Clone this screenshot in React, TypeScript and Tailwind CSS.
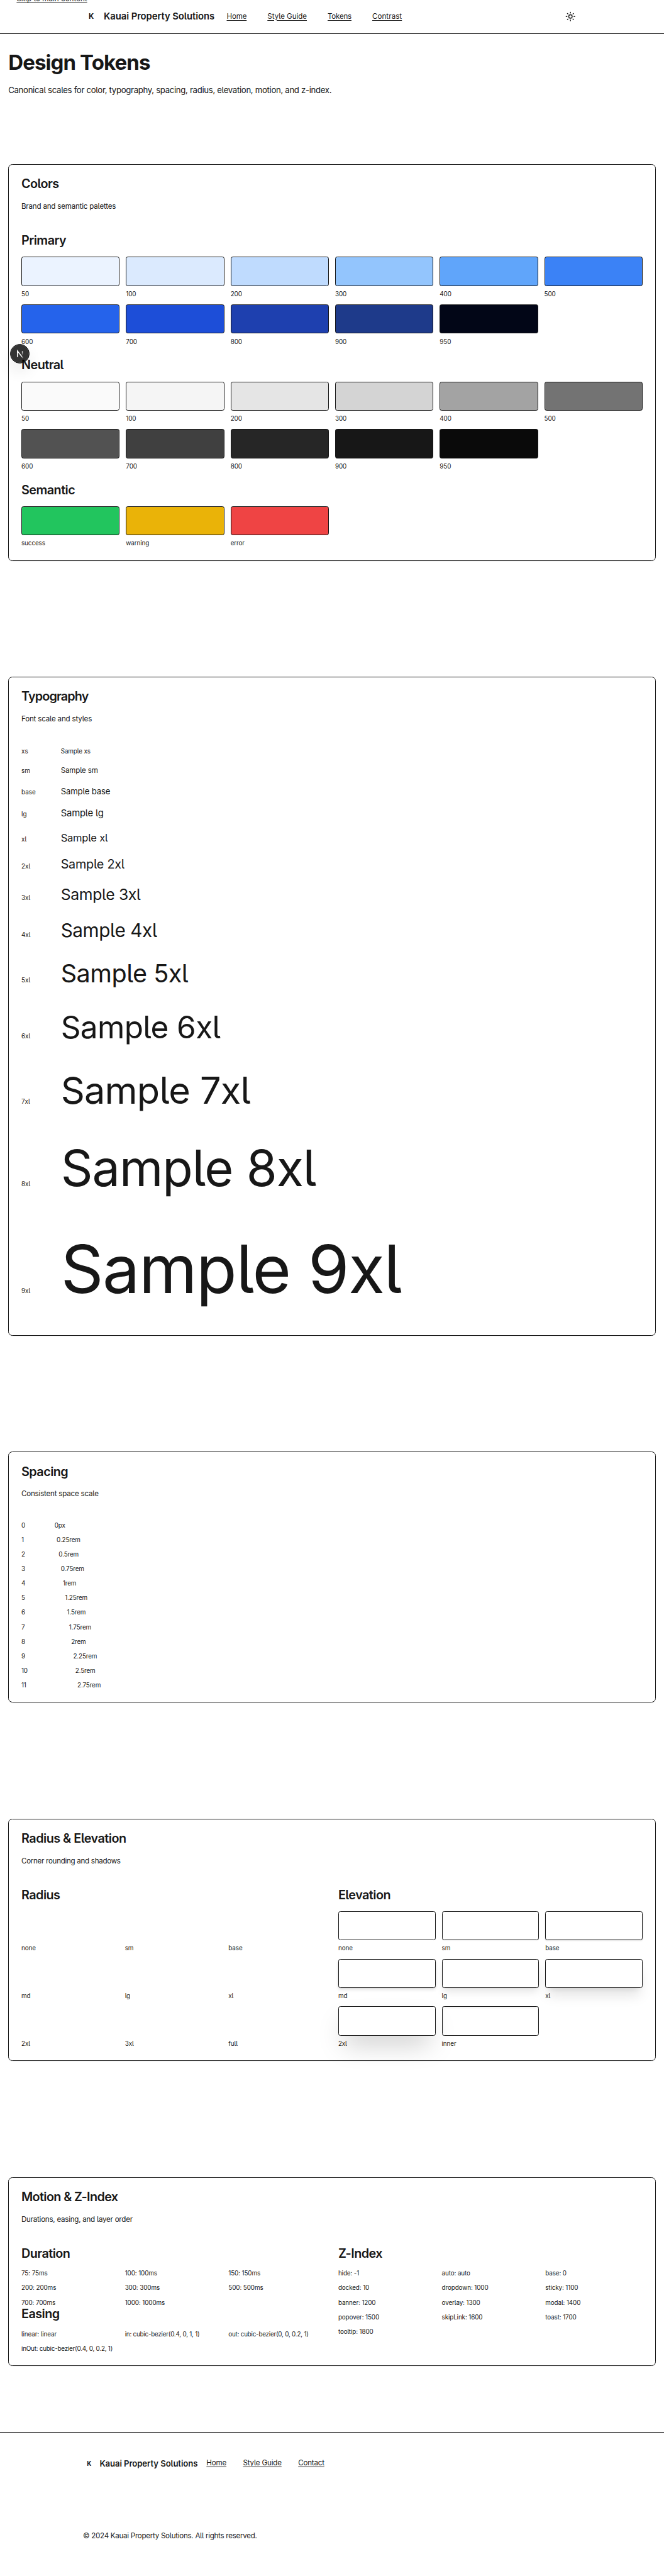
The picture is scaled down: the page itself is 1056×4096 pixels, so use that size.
import type { ReactNode } from "react";
import { Sun } from "lucide-react";

const primary = [
  ["50", "bg-[#ebf3ff]"], ["100", "bg-[#dbeafe]"], ["200", "bg-[#bfdbfe]"], ["300", "bg-[#93c5fd]"],
  ["400", "bg-[#60a5fa]"], ["500", "bg-[#3b82f6]"], ["600", "bg-[#2563eb]"], ["700", "bg-[#1d4ed8]"],
  ["800", "bg-[#1e40af]"], ["900", "bg-[#1e3a8a]"], ["950", "bg-[#020617]"],
];
const neutral = [
  ["50", "bg-[#fafafa]"], ["100", "bg-[#f5f5f5]"], ["200", "bg-[#e5e5e5]"], ["300", "bg-[#d4d4d4]"],
  ["400", "bg-[#a3a3a3]"], ["500", "bg-[#737373]"], ["600", "bg-[#525252]"], ["700", "bg-[#404040]"],
  ["800", "bg-[#262626]"], ["900", "bg-[#171717]"], ["950", "bg-[#0a0a0a]"],
];
const semantic = [
  ["success", "bg-[#22c55e]"], ["warning", "bg-[#eab308]"], ["error", "bg-[#ef4444]"],
];
const typeScale = [
  ["xs", "text-[12px]"], ["sm", "text-[14px]"], ["base", "text-[16px]"], ["lg", "text-[18px]"],
  ["xl", "text-[20px]"], ["2xl", "text-[24px]"], ["3xl", "text-[30px]"], ["4xl", "text-[36px]"],
  ["5xl", "text-[48px]"], ["6xl", "text-[60px]"], ["7xl", "text-[72px]"], ["8xl", "text-[96px]"],
  ["9xl", "text-[128px]"],
];
const spacing = [
  "0px", "0.25rem", "0.5rem", "0.75rem", "1rem", "1.25rem", "1.5rem", "1.75rem", "2rem", "2.25rem", "2.5rem", "2.75rem",
];
const radii = ["none", "sm", "base", "md", "lg", "xl", "2xl", "3xl", "full"];
const elevations = [
  ["none", ""],
  ["sm", "shadow-[0_1px_2px_0_rgba(0,0,0,0.05)]"],
  ["base", "shadow-[0_1px_3px_0_rgba(0,0,0,0.1),0_1px_2px_-1px_rgba(0,0,0,0.1)]"],
  ["md", "shadow-[0_4px_6px_-1px_rgba(0,0,0,0.1),0_2px_4px_-2px_rgba(0,0,0,0.1)]"],
  ["lg", "shadow-[0_10px_15px_-3px_rgba(0,0,0,0.1),0_4px_6px_-4px_rgba(0,0,0,0.1)]"],
  ["xl", "shadow-[0_20px_25px_-5px_rgba(0,0,0,0.1),0_8px_10px_-6px_rgba(0,0,0,0.1)]"],
  ["2xl", "shadow-[0_25px_50px_-12px_rgba(0,0,0,0.25)]"],
  ["inner", "shadow-[inset_0_2px_4px_0_rgba(0,0,0,0.05)]"],
];
const durations = ["75: 75ms", "100: 100ms", "150: 150ms", "200: 200ms", "300: 300ms", "500: 500ms", "700: 700ms", "1000: 1000ms"];
const easings = ["linear: linear", "in: cubic-bezier(0.4, 0, 1, 1)", "out: cubic-bezier(0, 0, 0.2, 1)", "inOut: cubic-bezier(0.4, 0, 0.2, 1)"];
const zIndex = [
  "hide: -1", "auto: auto", "base: 0", "docked: 10", "dropdown: 1000", "sticky: 1100", "banner: 1200",
  "overlay: 1300", "modal: 1400", "popover: 1500", "skipLink: 1600", "toast: 1700", "tooltip: 1800",
];

function Card({ title, text, titleClass, textClass, children }: { title: string; text: string; titleClass: string; textClass: string; children: ReactNode }) {
  return (
    <section className="rounded-lg border border-[#171717] px-6 pt-6 pb-6 shadow-[0_1px_2px_0_rgba(0,0,0,0.05)]">
      <h2 className={`pt-[0.6px] text-[24px] leading-[26px] font-semibold ${titleClass}`}>{title}</h2>
      <p className={`mt-[18.6px] mb-[41.7px] text-[14px] leading-[22.4px] ${textClass}`}>{text}</p>
      {children}
    </section>
  );
}

function SubTitle({ className = "mb-[18px]", children }: { className?: string; children: ReactNode }) {
  return <h3 className={`pt-[0.4px] text-[24px] leading-[26px] font-semibold tracking-[-0.027em] ${className}`}>{children}</h3>;
}

function Swatches({ items }: { items: string[][] }) {
  return (
    <div className="grid grid-cols-6 gap-3">
      {items.map(([name, color]) => (
        <div key={name}>
          <div className={`h-14 rounded border border-[#171717] ${color}`} />
          <Label>{name}</Label>
        </div>
      ))}
    </div>
  );
}

function Label({ children }: { children: ReactNode }) {
  return <div className="mt-[7.8px] mb-[0.2px] text-[12px] leading-4 tracking-[-0.01em]">{children}</div>;
}

function Tokens({ items }: { items: string[] }) {
  return (
    <ul className="grid grid-cols-3 gap-3 text-[12px] leading-4">
      {items.map((t) => (
        <li key={t} className={t.includes("cubic") ? "whitespace-nowrap tracking-[-0.024em]" : "tracking-[-0.012em]"}>{t}</li>
      ))}
    </ul>
  );
}

const link = "underline decoration-1 underline-offset-[2.5px]";

export default function App() {
  return (
    <div className="relative h-[4965px] w-[1280px] overflow-hidden bg-white font-[Inter,sans-serif] text-[#171717] [font-feature-settings:'cv05'] [zoom:0.825]">
      <a className={`absolute top-[-13px] left-8 text-[14px] leading-[22px] tracking-[0.003em] ${link}`}>Skip to main content</a>

      <header className="border-b border-[#171717]">
        <div className="mx-auto flex h-16 w-[960px] items-center">
          <div className="flex items-center gap-2">
            <span className="w-8 text-center text-[14px] font-bold">K</span>
            <span className="w-[213px] whitespace-nowrap text-[18px] font-semibold tracking-[-0.006em]">Kauai Property Solutions</span>
          </div>
          <nav className="ml-6 flex gap-10 text-[14px]">
            <a className={`tracking-[-0.013em] ${link}`}>Home</a>
            <a className={`tracking-[-0.002em] ${link}`}>Style Guide</a>
            <a className={`tracking-[-0.018em] ${link}`}>Tokens</a>
            <a className={`tracking-[0.006em] ${link}`}>Contrast</a>
          </nav>
          <button className="ml-auto flex size-10 items-center justify-center" aria-label="Toggle theme">
            <Sun size={20} strokeWidth={2} />
          </button>
        </div>
      </header>

      <main className="px-4 pt-8 pb-[128px]">
        <h1 className="text-[40px] leading-[48px] font-bold tracking-[-0.027em]">Design Tokens</h1>
        <p className="mt-4 mb-[129.3px] text-[16px] leading-[25.6px] tracking-[-0.0245em]">
          Canonical scales for color, typography, spacing, radius, elevation, motion, and z-index.
        </p>

        <div className="flex flex-col gap-[223.7px]">
          <Card title="Colors" text="Brand and semantic palettes" titleClass="tracking-[-0.029em]" textClass="tracking-[-0.016em]">
            <div className="flex flex-col gap-6">
              <div><SubTitle>Primary</SubTitle><Swatches items={primary} /></div>
              <div><SubTitle>Neutral</SubTitle><Swatches items={neutral} /></div>
              <div><SubTitle>Semantic</SubTitle><Swatches items={semantic} /></div>
            </div>
          </Card>

          <Card title="Typography" text="Font scale and styles" titleClass="tracking-[-0.043em]" textClass="tracking-[-0.014em]">
            <div className="flex flex-col gap-4">
              {typeScale.map(([name, size]) => (
                <div key={name} className="flex items-baseline gap-3">
                  <span className="w-16 text-[12px] leading-4">{name}</span>
                  <span className={`leading-[1.6] tracking-[-0.013em] ${size}`}>Sample {name}</span>
                </div>
              ))}
            </div>
          </Card>

          <Card title="Spacing" text="Consistent space scale" titleClass="tracking-[-0.027em]" textClass="tracking-[-0.016em]">
            <div className="-mt-[0.5px] flex flex-col gap-3 pb-[0.5px] text-[12px] leading-4 tracking-[-0.015em]">
              {spacing.map((value, i) => (
                <div key={value} className="flex items-center gap-3">
                  <span className="w-10">{i}</span>
                  <span className="h-3" style={{ width: i * 4 }} />
                  <span>{value}</span>
                </div>
              ))}
            </div>
          </Card>

          <Card title="Radius & Elevation" text="Corner rounding and shadows" titleClass="tracking-[-0.0254em]" textClass="tracking-[-0.024em]">
            <div className="grid grid-cols-2 gap-6">
              <div>
                <SubTitle className="mb-[17.2px]">Radius</SubTitle>
                <div className="grid grid-cols-3 gap-3">
                  {radii.map((r) => (
                    <div key={r}><div className="h-14" /><Label>{r}</Label></div>
                  ))}
                </div>
              </div>
              <div>
                <SubTitle className="mb-[17.2px]">Elevation</SubTitle>
                <div className="grid grid-cols-3 gap-3">
                  {elevations.map(([name, shadow]) => (
                    <div key={name}>
                      <div className={`h-14 rounded border border-[#171717] ${shadow}`} />
                      <Label>{name}</Label>
                    </div>
                  ))}
                </div>
              </div>
            </div>
          </Card>

          <Card title="Motion & Z-Index" text="Durations, easing, and layer order" titleClass="tracking-[-0.0317em]" textClass="tracking-[-0.02em]">
            <div className="grid grid-cols-2 gap-6">
              <div>
                <SubTitle className="mb-[16.8px]">Duration</SubTitle>
                <Tokens items={durations} />
                <SubTitle className="mt-[0.6px] mb-[17.6px]">Easing</SubTitle>
                <Tokens items={easings} />
              </div>
              <div>
                <SubTitle className="mb-[16.8px]">Z-Index</SubTitle>
                <Tokens items={zIndex} />
              </div>
            </div>
          </Card>
        </div>
      </main>

      <footer className="border-t border-[#171717] pt-12">
        <div className="mx-auto w-[960px]">
          <div className="flex items-start">
            <div className="flex items-center gap-2 leading-6">
              <span className="w-6 text-center text-[12px] font-bold">K</span>
              <span className="w-[190px] whitespace-nowrap text-[16px] font-semibold tracking-[-0.0076em]">Kauai Property Solutions</span>
            </div>
            <nav className="ml-4 flex gap-8 text-[14px] leading-5">
              <a className={`tracking-[-0.013em] ${link}`}>Home</a>
              <a className={`tracking-[-0.013em] ${link}`}>Style Guide</a>
              <a className={`tracking-[-0.016em] ${link}`}>Contact</a>
            </nav>
          </div>
          <p className="mt-[115.4px] text-[14px] leading-[22.4px] tracking-[-0.023em]">© 2024 Kauai Property Solutions. All rights reserved.</p>
        </div>
      </footer>

      <div className="absolute top-[663px] left-[19px] flex size-[38px] items-center justify-center rounded-full border border-[#171717] bg-black/80 shadow-[inset_0_0_0_1px_rgba(255,255,255,0.14),0_16px_32px_-8px_rgba(0,0,0,0.24)]">
        <svg width="36" height="36" viewBox="2 2 36 36" fill="none" className="shrink-0">
          <defs>
            <linearGradient id="diagonalFade" x1="9.96" y1="11.12" x2="15.48" y2="17.97" gradientUnits="userSpaceOnUse">
              <stop stopColor="white" /><stop offset="0.604" stopColor="white" stopOpacity="0" /><stop offset="1" stopColor="white" stopOpacity="0" />
            </linearGradient>
            <linearGradient id="stemFade" x1="11.82" y1="1.4" x2="11.79" y2="9.63" gradientUnits="userSpaceOnUse">
              <stop stopColor="white" /><stop offset="1" stopColor="white" stopOpacity="0" />
            </linearGradient>
          </defs>
          <g transform="translate(12.7 13.2)" strokeWidth="1.86">
            <path d="M13.3 15.2 L2.34 1 V12.6" stroke="url(#diagonalFade)" />
            <path d="M11.825 1.5 V13.1" stroke="url(#stemFade)" />
          </g>
        </svg>
      </div>
    </div>
  );
}
